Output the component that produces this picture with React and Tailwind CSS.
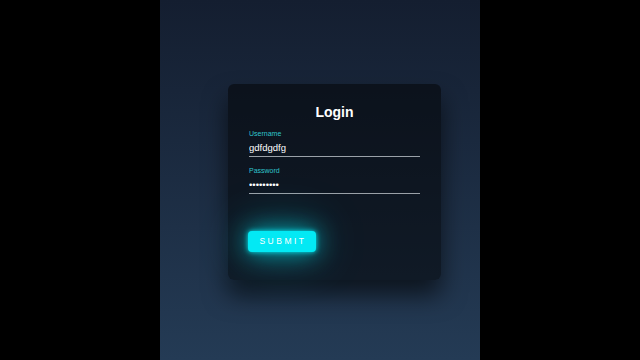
import React, { useState } from 'react';

const Field = ({ label, type, value, onChange }) => (
  <div className="flex flex-col">
    <label className="text-[7px] leading-[8px] text-[#2fc4cc]">{label}</label>
    <input
      type={type}
      value={value}
      onChange={onChange}
      className="mt-[3px] h-[16px] w-full bg-transparent border-b border-[#9aa1a8] text-[9.5px] text-white outline-none pb-[2px]"
    />
  </div>
);

const App = () => {
  const [username, setUsername] = useState('gdfdgdfg');
  const [password, setPassword] = useState('123456789');

  return (
    <div className="flex h-[360px] w-full justify-center bg-black" style={{ fontFamily: '"Liberation Sans", Arial, sans-serif' }}>
      <div className="w-[320px] h-full bg-gradient-to-b from-[#141e30] to-[#243b55]">
        {/* login box */}
        <div className="mt-[84px] ml-[68px] w-[213px] h-[196px] rounded-[6px] bg-[rgba(0,0,0,0.5)] shadow-[0_15px_25px_rgba(0,0,0,0.6)] px-[21px] pt-[20px]">
          <h2 className="text-center text-[14px] leading-[16px] font-bold text-white">Login</h2>
          <div className="mt-[10px] flex flex-col gap-[10px]">
            <Field label="Username" type="text" value={username} onChange={e => setUsername(e.target.value)} />
            <Field label="Password" type="password" value={password} onChange={e => setPassword(e.target.value)} />
          </div>
          <button className="-ml-[1px] mt-[37px] w-[68px] h-[21px] rounded-[4px] bg-[#03e9f4] text-white text-[8.5px] tracking-[2.5px] pl-[2px] shadow-[0_0_5px_#03e9f4,0_0_25px_rgba(3,233,244,0.7),0_0_50px_rgba(3,233,244,0.4)]">
            SUBMIT
          </button>
        </div>
      </div>
    </div>
  );
};

export default App;
